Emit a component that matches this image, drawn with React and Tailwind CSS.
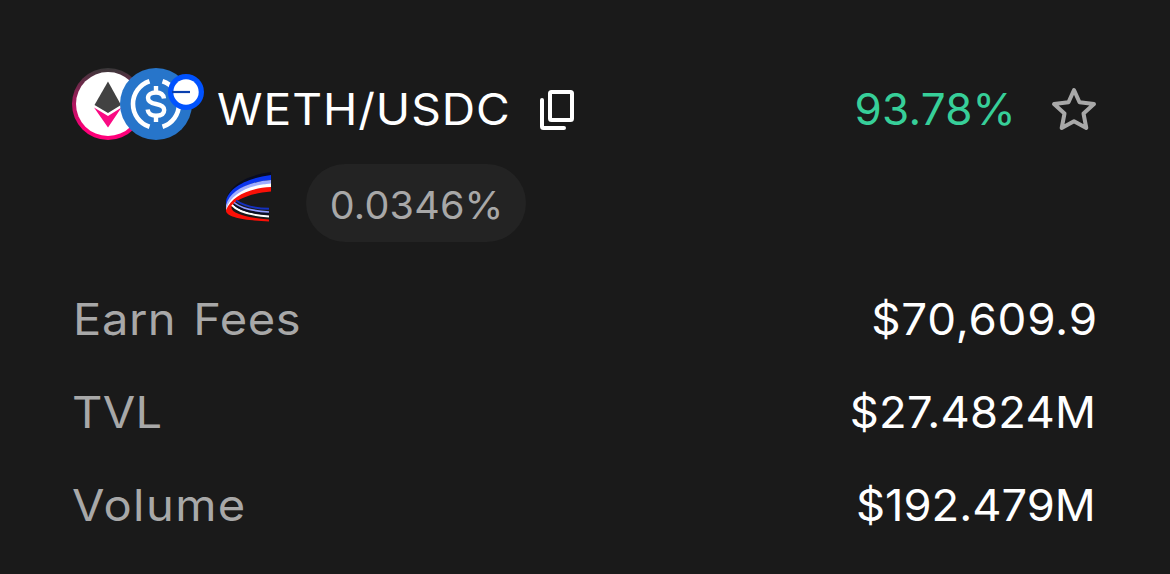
import React from "react";

const stats = [
  {
    label: "Earn Fees",
    value: "$70,609.9",
    labelClass: "scale-x-107 pl-[1px] tracking-[0.5px] [word-spacing:3px]",
    valueClass: "scale-x-104 tracking-[0.7px]",
  },
  {
    label: "TVL",
    value: "$27.4824M",
    labelClass: "scale-x-107 tracking-[0.3px]",
    valueClass: "scale-x-103 pr-[2px] tracking-[0.25px]",
  },
  {
    label: "Volume",
    value: "$192.479M",
    labelClass: "scale-x-107 tracking-[1.3px]",
    valueClass: "scale-x-103 pr-[2px]",
  },
];

const PairIcon = () => (
  <svg width="132" height="72" viewBox="0 0 132 72" fill="none">
    <defs>
      <linearGradient id="wethRing" x1="36" y1="0" x2="36" y2="72" gradientUnits="userSpaceOnUse">
        <stop stopColor="#383838" />
        <stop offset="0.85" stopColor="#ff007a" />
      </linearGradient>
    </defs>

    {/* WETH */}
    <circle cx="36" cy="36" r="36" fill="url(#wethRing)" />
    <circle cx="36" cy="36" r="32" fill="#fff" />
    <path d="M36 13.5L49 37L36 45L22.5 37Z" fill="#424242" />
    <path d="M22 39.5L36 48L49.5 39.5L36 59.5Z" fill="#fa0a83" />

    {/* USDC */}
    <circle cx="84" cy="36" r="36" fill="#2775ca" />
    <path
      d="M77.5 13.200A24 24 0 0 0 77.5 58.800M90.5 13.200A24 24 0 0 1 90.5 58.800"
      stroke="#fff"
      strokeWidth="4.6"
    />
    <path d="M84 18V25M84 47V54" stroke="#fff" strokeWidth="4.4" />
    <path
      d="M92 30.500C91.400 26.500 88.400 24.500 84 24.500C79 24.500 76 26.700 76 30C76 33.800 79 35 84 36C89.400 37 92.200 38.500 92.200 42C92.200 45.700 89.200 47.700 84 47.700C79 47.700 76.200 45.500 75.600 41.500"
      stroke="#fff"
      strokeWidth="4.4"
    />

    {/* chain badge */}
    <circle cx="114" cy="24" r="18" fill="#0052ff" />
    <circle cx="114" cy="24" r="12.7" fill="#fff" />
    <path d="M100 24H118" stroke="#0a3fae" strokeWidth="2.2" />
  </svg>
);

const DexIcon = () => (
  <svg width="48" height="52" viewBox="0 0 48 52" fill="none">
    <path d="M4 22C12 9 27 3 47 0V4C27 7 10 14 3 27Z" fill="#080c20" />
    <path d="M2 30C3 17 22 6 47 3V8C25 10 8 18 2 33Z" fill="#0b35ee" />
    <path d="M2 33C6 19 23 10 47 8V12C25 14 9 22 2 37Z" fill="#9fadff" />
    <path d="M2 37C7 22 24 13 47 11.500V16C26 18 10 26 2 39Z" fill="#fff" />
    <path
      d="M2 38C8 24 25 16 47 15V19.500C28 21 11 27 7.500 35C6 41 24 46 45 47.500V49.500C20 48.500 1 45 2 38Z"
      fill="#fa1007"
    />
    <path d="M8 33C14 40 30 43.500 45 44.500" stroke="#fff" strokeWidth="2" />
    <path d="M10 32C16 38 29 41 45 42" stroke="#090d25" strokeWidth="2" />
    <path d="M10 30.500C18 37 29 39 45 40" stroke="#8d9aff" strokeWidth="1.600" />
    <path d="M12 28.500C20 34 29 36.500 45 36.800" stroke="#1430be" strokeWidth="2" />
  </svg>
);

const CopyIcon = () => (
  <svg width="34" height="40" viewBox="0 0 34 40" fill="none" stroke="#fff" strokeWidth="4" strokeLinejoin="round" strokeLinecap="round">
    <rect x="10" y="2" width="22" height="28" rx="1.500" />
    <path d="M2 10V36.500Q2 38 3.500 38H24" />
  </svg>
);

const StarIcon = () => (
  <svg width="46" height="46" viewBox="0 0 46 46" fill="none" stroke="#a8a8a8" strokeWidth="4" strokeLinejoin="round">
    <path d="M23 4L28.500 16.200L43 18L32.500 27.500L35.300 42L23 35.200L10.700 42L13.500 27.500L3 18L17.500 16.200Z" />
  </svg>
);

export default function App() {
  return (
    <div className="h-[574px] w-[1170px] overflow-hidden bg-[#1a1a1a] pl-[72px] pr-[72px] pt-[68px] font-['Inter',sans-serif] text-[44px] font-normal text-white">
      {/* PAIR + APR */}
      <div className="flex h-[82px] items-center">
        <div className="mb-[10px] w-[132px] shrink-0">
          <PairIcon />
        </div>
        <span className="ml-[13px] w-[323px] origin-left scale-x-105 tracking-[0.9px]">WETH/USDC</span>
        <div className="mt-[2px]">
          <CopyIcon />
        </div>
        <span className="ml-auto tracking-[0.2px] text-[#37cf99]">93.78%</span>
        <div className="ml-[35px] mr-[1px]">
          <StarIcon />
        </div>
      </div>

      {/* DEX + FEE TIER */}
      <div className="mt-[14px] flex h-[78px] items-center pl-[152px]">
        <div className="mb-[10px]">
          <DexIcon />
        </div>
        <div className="ml-[34px] flex h-[78px] w-[220px] items-center justify-center rounded-full bg-[#232323] pl-[1px] pt-[4px] text-[38px] text-[#a8a8a8]">
          <span className="scale-x-104 tracking-[0.2px]">0.0346%</span>
        </div>
      </div>

      {/* STATS */}
      <div className="mt-[30px]">
        {stats.map((s) => (
          <div key={s.label} className="flex h-[93px] items-center justify-between">
            <span className={`origin-left text-[#a8a8a8] ${s.labelClass}`}>{s.label}</span>
            <span className={`origin-right ${s.valueClass}`}>{s.value}</span>
          </div>
        ))}
      </div>
    </div>
  );
}
